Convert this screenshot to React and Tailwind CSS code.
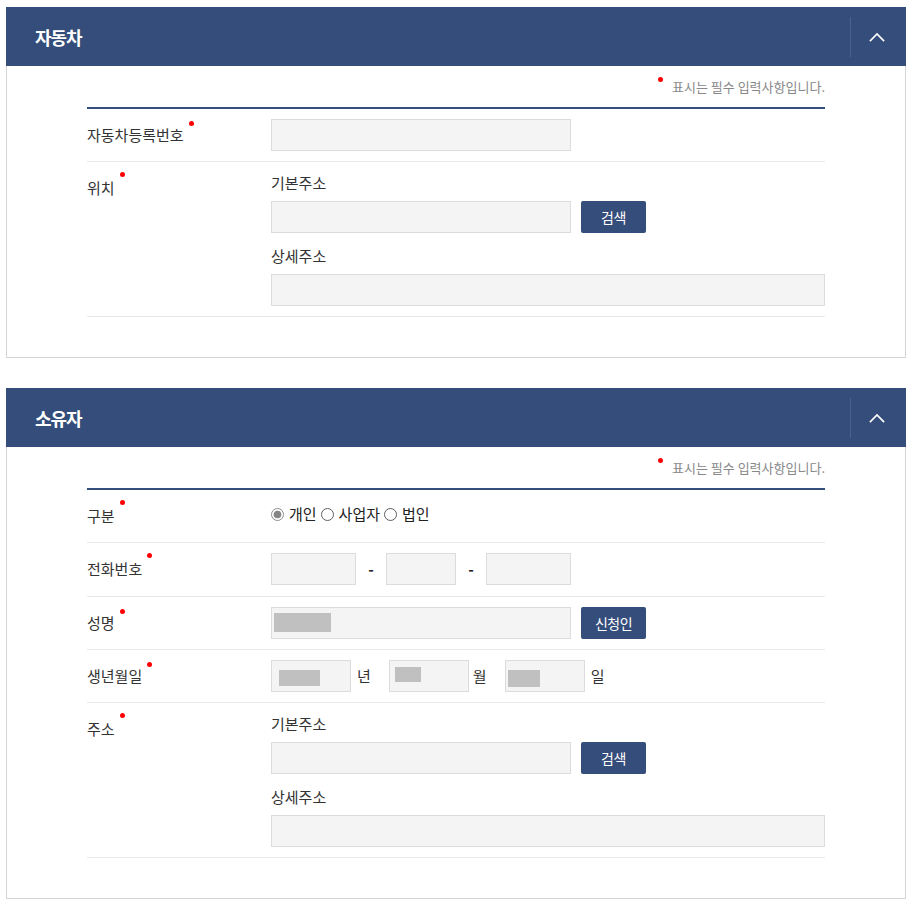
import React from "react";

function Chevron() {
  return (
    <svg width="16" height="10" viewBox="0 0 16 10" aria-hidden="true">
      <path d="M1.5 8.5 L8 2 L14.5 8.5" stroke="#ffffff" strokeWidth="1.7" fill="none" strokeLinecap="square" />
    </svg>
  );
}

function Dot({ className = "" }) {
  return <span className={"block shrink-0 w-[5px] h-[5px] rounded-full bg-[#ff0000] " + className} />;
}

function Section({ title, children, className = "" }) {
  return (
    <section className={className}>
      <div className="h-[59px] bg-[#344d7a] flex items-center justify-between">
        <h2 className="pl-[29px] text-white text-[18px] leading-none font-bold tracking-[-1px]">{title}</h2>
        <div className="h-[40px] w-[56px] border-l border-[#4a6290] flex items-center justify-center pr-[4px]">
          <Chevron />
        </div>
      </div>
      <div className="border border-t-0 border-[#d5d5d5] px-[80px] pt-[12px] pb-[40px]">
        <div className="flex justify-end items-start h-[18px] mb-[11px]">
          <Dot className="mt-[-1px] mr-[9px]" />
          <span className="text-[13px] leading-[18px] text-[#888888]">표시는 필수 입력사항입니다.</span>
        </div>
        <div className="border-t-2 border-[#344d7a]">{children}</div>
      </div>
    </section>
  );
}

function Row({ label, children, dotClass = "mt-[1px]", pad = "py-[10px]" }) {
  return (
    <div className={"flex border-b border-[#e8e8e8] " + pad}>
      <div className="w-[184px] shrink-0 flex items-start">
        <span className="leading-[32px] text-[15px] text-[#333333]">{label}</span>
        <Dot className={"ml-[5px] " + dotClass} />
      </div>
      <div className="flex-1 min-w-0">{children}</div>
    </div>
  );
}

function Input({ className = "w-[300px]", children }) {
  return <div className={"h-8 shrink-0 bg-[#f4f4f4] border border-[#dcdcdc] " + className}>{children}</div>;
}

function Button({ children }) {
  return (
    <button className="w-[65px] h-8 shrink-0 bg-[#344d7a] rounded-[2px] text-white text-[14px] tracking-[-0.5px] flex items-center justify-center">
      {children}
    </button>
  );
}

function Address() {
  return (
    <div>
      <p className="leading-[22px] text-[15px] text-[#333333] mb-[7px]">기본주소</p>
      <div className="flex gap-[10px]">
        <Input />
        <Button>검색</Button>
      </div>
      <p className="mt-[12px] leading-[22px] text-[15px] text-[#333333] mb-[7px]">상세주소</p>
      <Input className="w-full" />
    </div>
  );
}

function Radio({ checked, label, last }) {
  return (
    <span className="flex items-center">
      <svg width="13" height="13" viewBox="0 0 13 13" className="mr-[5px]" aria-hidden="true">
        {checked ? (
          <>
            <circle cx="6.5" cy="6.5" r="6" fill="#ffffff" stroke="#8c8c8c" strokeWidth="1" />
            <circle cx="6.5" cy="6.5" r="3.8" fill="#858585" />
          </>
        ) : (
          <circle cx="6.5" cy="6.5" r="6" fill="#ffffff" stroke="#5f5f5f" strokeWidth="1" />
        )}
      </svg>
      <span className={"text-[15px] text-[#222222] " + (last ? "" : "mr-[4px]")}>{label}</span>
    </span>
  );
}

function Dash() {
  return <span className="w-[30px] text-center text-[15px] font-bold text-[#222222]">-</span>;
}

function Unit({ children, className = "ml-[6px] mr-[18px]" }) {
  return <span className={"text-[15px] text-[#333333] " + className}>{children}</span>;
}

export default function App() {
  return (
    <div className="w-[900px] ml-[6px] pt-[7px] pb-[8px] font-['Noto_Sans_CJK_KR','Noto_Sans',sans-serif] text-[#333333]">
      <Section title="자동차">
        <Row label="자동차등록번호" dotClass="mt-[2px]">
          <Input />
        </Row>
        <Row label="위치" dotClass="mt-0">
          <Address />
        </Row>
      </Section>

      <Section title="소유자" className="mt-[30px]">
        <Row label="구분" dotClass="mt-0">
          <div className="flex items-center h-[28px]">
            <Radio checked label="개인" />
            <Radio label="사업자" />
            <Radio label="법인" last />
          </div>
        </Row>
        <Row label="전화번호" dotClass="mt-0" pad="pt-[10px] pb-[11px]">
          <div className="flex items-center">
            <Input className="w-[85px]" />
            <Dash />
            <Input className="w-[70px]" />
            <Dash />
            <Input className="w-[85px]" />
          </div>
        </Row>
        <Row label="성명" dotClass="mt-[2px]">
          <div className="flex gap-[10px]">
            <Input>
              <div className="ml-[2px] mt-[5px] w-[57px] h-[19px] bg-[#c0c0c0]" />
            </Input>
            <Button>신청인</Button>
          </div>
        </Row>
        <Row label="생년월일" dotClass="mt-[2px]">
          <div className="flex items-center">
            <Input className="w-[80px]">
              <div className="ml-[7px] mt-[9px] w-[41px] h-[16px] bg-[#c0c0c0]" />
            </Input>
            <Unit>년</Unit>
            <Input className="w-[80px]">
              <div className="ml-[5px] mt-[6px] w-[26px] h-[15px] bg-[#c0c0c0]" />
            </Input>
            <Unit className="ml-[4px] mr-[18px]">월</Unit>
            <Input className="w-[80px]">
              <div className="ml-[2px] mt-[9px] w-[32px] h-[17px] bg-[#c0c0c0]" />
            </Input>
            <Unit className="ml-[6px]">일</Unit>
          </div>
        </Row>
        <Row label="주소" dotClass="mt-0">
          <Address />
        </Row>
      </Section>
    </div>
  );
}
